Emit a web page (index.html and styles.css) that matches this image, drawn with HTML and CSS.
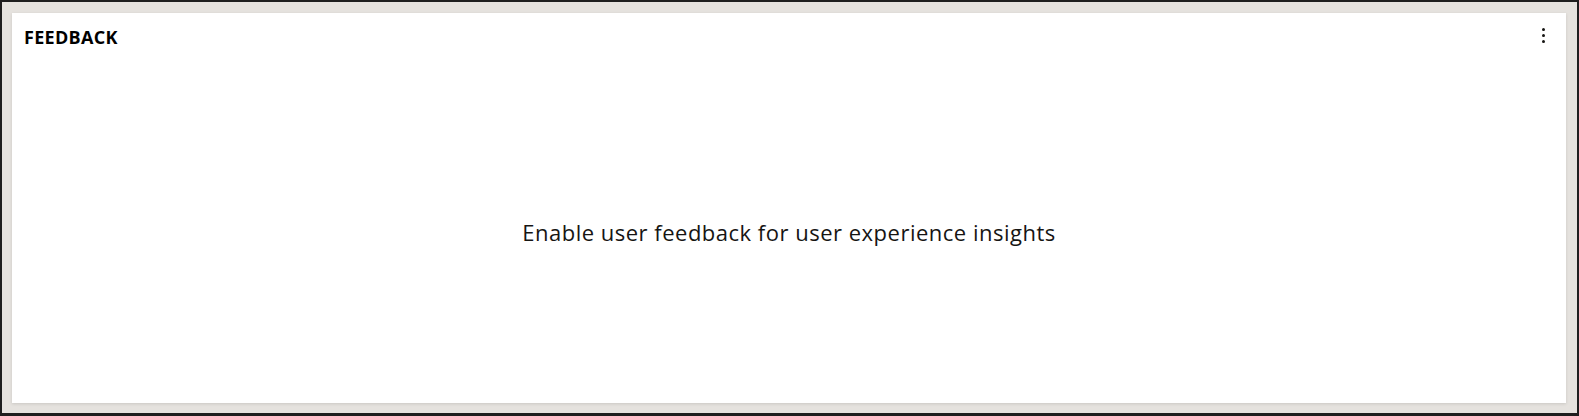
FILE: index.html
```html
<!DOCTYPE html>
<html>
<head>
<meta charset="utf-8">
<link rel="stylesheet" href="styles.css">
</head>
<body>
<div class="frame">
  <section class="card">
    <header class="card-header">
      <h2 class="card-title">FEEDBACK</h2>
      <button class="kebab" aria-label="More options">
        <span class="dot"></span><span class="dot"></span><span class="dot"></span>
      </button>
    </header>
    <div class="card-body">
      <p class="empty-text">Enable user feedback for user experience insights</p>
    </div>
  </section>
</div>
</body>
</html>
```
FILE: styles.css
```css
html, body {
  margin: 0;
  padding: 0;
  height: 100%;
}
body {
  font-family: "Open Sans", "Noto Sans", sans-serif;
  color: #161513;
}
.frame {
  box-sizing: border-box;
  height: 416px;
  border: 2px solid #1e1e1e;
  border-bottom-width: 3px;
  background: #e5e2de;
  padding: 11px 11px 10px 10px;
  display: flex;
}
.card {
  flex: 1;
  background: #ffffff;
  box-shadow: 0 1px 3px rgba(0,0,0,0.12);
  display: flex;
  flex-direction: column;
}
.card-header {
  height: 50px;
  display: flex;
  align-items: flex-start;
  justify-content: space-between;
  padding: 0 12px 0 12px;
}
.card-title {
  margin: 13px 0 0 0;
  font-size: 18px;
  font-weight: 700;
  letter-spacing: 0.3px;
  line-height: 22px;
  color: #000;
}
.kebab {
  margin-top: 15px;
  margin-right: 8px;
  width: 6px;
  padding: 0;
  border: 0;
  background: none;
  display: flex;
  flex-direction: column;
  align-items: center;
  gap: 3px;
}
.dot {
  width: 3px;
  height: 3px;
  border-radius: 50%;
  background: #161513;
}
.card-body {
  flex: 1;
  display: flex;
  align-items: center;
  justify-content: center;
}
.empty-text {
  margin: 0 0 2px 0;
  font-size: 22px;
  letter-spacing: 0.5px;
  line-height: 30px;
  color: #161513;
}
```
